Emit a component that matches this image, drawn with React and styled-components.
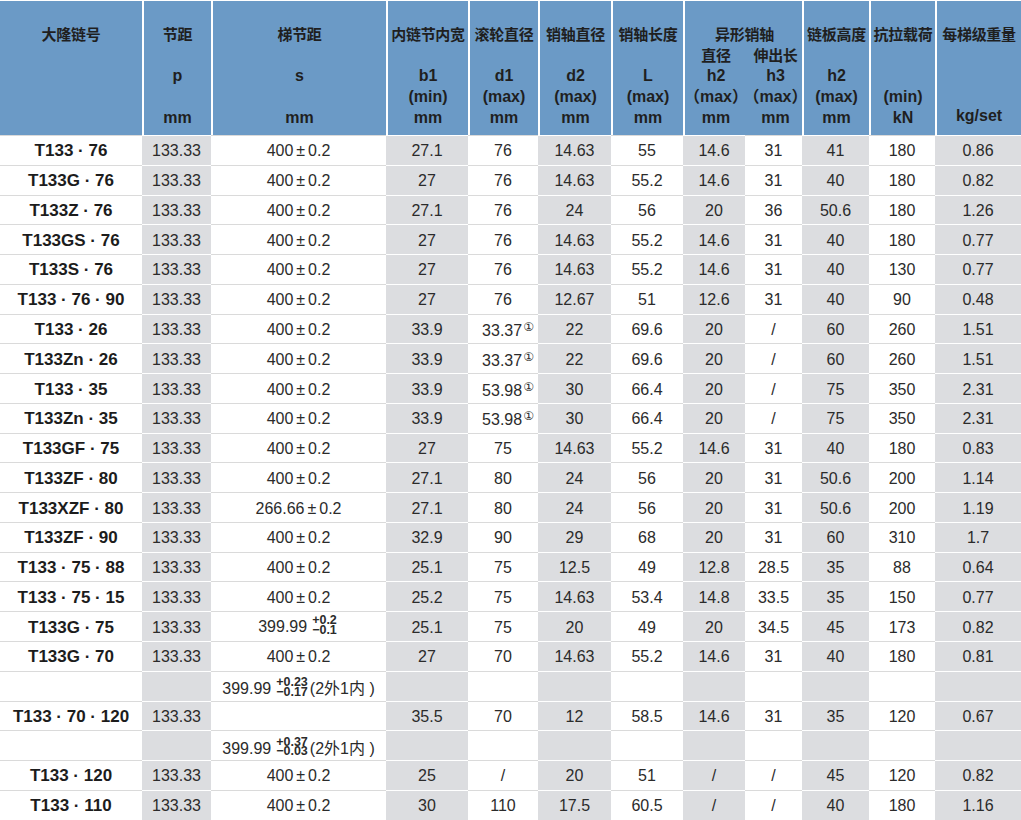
import React from 'react'
import styled, { createGlobalStyle } from 'styled-components'

const GlobalStyle = createGlobalStyle`
  * { box-sizing: border-box; }
  body {
    margin: 0;
    background: #ffffff;
    font-family: "Liberation Sans", "Noto Sans CJK SC", Arial, sans-serif;
    color: #2b2b2b;
  }
`

const BLUE = '#6b9ac6'
const SHADE = '#dcdde0'

// column widths, left to right
const widths = [142, 69, 175, 82, 70, 73, 72, 62, 57, 67, 66, 86]
// which columns carry the grey band
const shaded = [false, true, false, true, false, true, false, true, false, true, false, true]

const Table = styled.table`
  width: 1021px;
  table-layout: fixed;
  border-collapse: separate;
  border-spacing: 0;
  border-top: 1px solid #fff;
`

const HeadCell = styled.th`
  background: ${BLUE};
  height: 134px;
  padding: 22px 0 0;
  vertical-align: top;
  border-left: ${(p) => (p.$first ? '0' : '2px')} solid #fff;
  font-weight: bold;
  color: #1f1f1f;
`

const HeadStack = styled.div`
  display: grid;
  grid-template-columns: ${(p) => p.$cols || '1fr'};
  grid-template-rows: repeat(5, 21px);
  justify-items: center;
  align-items: center;
`

const Line = styled.span`
  grid-row: ${(p) => p.$row};
  grid-column: ${(p) => p.$col || 'auto'};
  font-size: ${(p) => (p.$cjk ? '15px' : '16px')};
  font-family: ${(p) =>
    p.$cjk
      ? '"Noto Sans CJK SC", "Liberation Sans", sans-serif'
      : '"Liberation Sans", "Noto Sans CJK SC", sans-serif'};
  font-weight: bold;
  line-height: 21px;
  white-space: nowrap;
  letter-spacing: ${(p) => (p.$cjk ? '-0.3px' : '0')};
  margin-top: ${(p) => p.$lift || 0};
`

const Row = styled.tr`
  height: 29.78px;
`

const Cell = styled.td`
  padding: 2px 0 0;
  text-align: center;
  vertical-align: middle;
  font-size: 16px;
  white-space: nowrap;
  background: ${(p) => (p.$shade ? SHADE : '#fff')};
  border-top: 1px solid ${(p) => (p.$shade ? '#fff' : '#dadada')};
  color: #2b2b2b;
`

const NameCell = styled(Cell)`
  font-size: 17px;
  font-weight: bold;
  color: #1c1c1c;
`

const Note = styled.span`
  font-family: "DejaVu Sans", sans-serif;
  font-size: 12px;
  vertical-align: 5px;
  margin-left: 1px;
  margin-right: -10px;
`

const PlusMinus = styled.span`
  margin: 0 3px;
`

const Stack = styled.span`
  display: inline-flex;
  flex-direction: column;
  align-items: flex-start;
  vertical-align: middle;
  font-size: 12.5px;
  font-weight: bold;
  line-height: 9.5px;
  margin: 0 2px 0 5px;
  position: relative;
  top: -2px;
`

const Aside = styled.span`
  font-family: "Liberation Sans", "Noto Sans CJK SC", sans-serif;
  font-size: 16px;
`

const pm = (base) => (
  <>
    {base}
    <PlusMinus>±</PlusMinus>0.2
  </>
)

const tol = (up, down, tail) => (
  <>
    399.99
    <Stack>
      <span>{up}</span>
      <span>{down}</span>
    </Stack>
    {tail && <Aside>(2外1内 )</Aside>}
  </>
)

const noted = (v) => (
  <>
    {v}
    <Note>①</Note>
  </>
)

const S = pm('400')

const rows = [
  ['T133 · 76', '133.33', S, '27.1', '76', '14.63', '55', '14.6', '31', '41', '180', '0.86'],
  ['T133G · 76', '133.33', S, '27', '76', '14.63', '55.2', '14.6', '31', '40', '180', '0.82'],
  ['T133Z · 76', '133.33', S, '27.1', '76', '24', '56', '20', '36', '50.6', '180', '1.26'],
  ['T133GS · 76', '133.33', S, '27', '76', '14.63', '55.2', '14.6', '31', '40', '180', '0.77'],
  ['T133S · 76', '133.33', S, '27', '76', '14.63', '55.2', '14.6', '31', '40', '130', '0.77'],
  ['T133 · 76 · 90', '133.33', S, '27', '76', '12.67', '51', '12.6', '31', '40', '90', '0.48'],
  ['T133 · 26', '133.33', S, '33.9', noted('33.37'), '22', '69.6', '20', '/', '60', '260', '1.51'],
  ['T133Zn · 26', '133.33', S, '33.9', noted('33.37'), '22', '69.6', '20', '/', '60', '260', '1.51'],
  ['T133 · 35', '133.33', S, '33.9', noted('53.98'), '30', '66.4', '20', '/', '75', '350', '2.31'],
  ['T133Zn · 35', '133.33', S, '33.9', noted('53.98'), '30', '66.4', '20', '/', '75', '350', '2.31'],
  ['T133GF · 75', '133.33', S, '27', '75', '14.63', '55.2', '14.6', '31', '40', '180', '0.83'],
  ['T133ZF · 80', '133.33', S, '27.1', '80', '24', '56', '20', '31', '50.6', '200', '1.14'],
  ['T133XZF · 80', '133.33', pm('266.66'), '27.1', '80', '24', '56', '20', '31', '50.6', '200', '1.19'],
  ['T133ZF · 90', '133.33', S, '32.9', '90', '29', '68', '20', '31', '60', '310', '1.7'],
  ['T133 · 75 · 88', '133.33', S, '25.1', '75', '12.5', '49', '12.8', '28.5', '35', '88', '0.64'],
  ['T133 · 75 · 15', '133.33', S, '25.2', '75', '14.63', '53.4', '14.8', '33.5', '35', '150', '0.77'],
  ['T133G · 75', '133.33', tol('+0.2', '−0.1'), '25.1', '75', '20', '49', '20', '34.5', '45', '173', '0.82'],
  ['T133G · 70', '133.33', S, '27', '70', '14.63', '55.2', '14.6', '31', '40', '180', '0.81'],
  ['', '', tol('+0.23', '−0.17', true), '', '', '', '', '', '', '', '', ''],
  ['T133 · 70 · 120', '133.33', '', '35.5', '70', '12', '58.5', '14.6', '31', '35', '120', '0.67'],
  ['', '', tol('+0.37', '−0.03', true), '', '', '', '', '', '', '', '', ''],
  ['T133 · 120', '133.33', S, '25', '/', '20', '51', '/', '/', '45', '120', '0.82'],
  ['T133 · 110', '133.33', S, '30', '110', '17.5', '60.5', '/', '/', '40', '180', '1.16'],
]

// plain header columns: title, symbol, qualifier, unit
const Head = ({ title, symbol, qual, unit, first, unitLift }) => (
  <HeadCell $first={first}>
    <HeadStack>
      <Line $row={1} $cjk>{title}</Line>
      {symbol && <Line $row={3}>{symbol}</Line>}
      {qual && <Line $row={4}>{qual}</Line>}
      {unit && <Line $row={5} $lift={unitLift}>{unit}</Line>}
    </HeadStack>
  </HeadCell>
)

const App = () => (
  <>
    <GlobalStyle />
    <Table>
      <colgroup>
        {widths.map((w, i) => (
          <col key={i} style={{ width: w }} />
        ))}
      </colgroup>
      <thead>
        <tr>
          <Head first title="大隆链号" />
          <Head title="节距" symbol="p" unit="mm" />
          <Head title="梯节距" symbol="s" unit="mm" />
          <Head title="内链节内宽" symbol="b1" qual="(min)" unit="mm" />
          <Head title="滚轮直径" symbol="d1" qual="(max)" unit="mm" />
          <Head title="销轴直径" symbol="d2" qual="(max)" unit="mm" />
          <Head title="销轴长度" symbol="L" qual="(max)" unit="mm" />
          <HeadCell colSpan={2}>
            <HeadStack $cols="62px 57px">
              <Line $row={1} $col="1 / 3" $cjk>异形销轴</Line>
              <Line $row={2} $col={1} $cjk>直径</Line>
              <Line $row={2} $col={2} $cjk>伸出长</Line>
              <Line $row={3} $col={1}>h2</Line>
              <Line $row={3} $col={2}>h3</Line>
              <Line $row={4} $col={1}>（max）</Line>
              <Line $row={4} $col={2}>（max）</Line>
              <Line $row={5} $col={1}>mm</Line>
              <Line $row={5} $col={2}>mm</Line>
            </HeadStack>
          </HeadCell>
          <Head title="链板高度" symbol="h2" qual="(max)" unit="mm" />
          <Head title="抗拉载荷" qual="(min)" unit="kN" />
          <Head title="每梯级重量" unit="kg/set" unitLift="-4px" />
        </tr>
      </thead>
      <tbody>
        {rows.map((r, i) => (
          <Row key={i}>
            {r.map((v, j) =>
              j === 0 ? (
                <NameCell key={j}>{v}</NameCell>
              ) : (
                <Cell key={j} $shade={shaded[j]}>
                  {v}
                </Cell>
              )
            )}
          </Row>
        ))}
      </tbody>
    </Table>
  </>
)

export default App
